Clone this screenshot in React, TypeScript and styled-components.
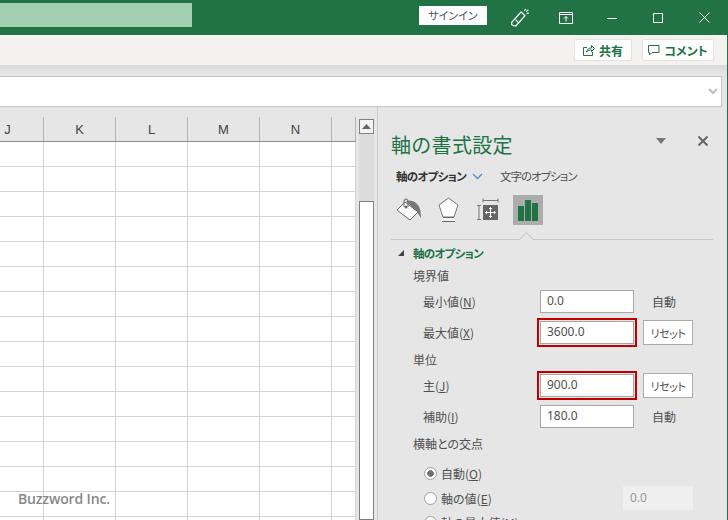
import styled, { createGlobalStyle } from "styled-components";

const GREEN = "#217346";
const CJK = `"Noto Sans CJK JP", "Noto Sans", sans-serif`;

const GlobalStyle = createGlobalStyle`
  html, body {
    margin: 0;
    padding: 0;
    background: #e6e6e6;
  }
  * {
    box-sizing: border-box;
  }
`;

const Page = styled.div`
  width: 728px;
  height: 520px;
  position: relative;
  overflow: hidden;
  display: flex;
  flex-direction: column;
  border-right: 1px solid ${GREEN};
  background: #e6e6e6;
  color: #505050;
  font-family: ${CJK};
  font-size: 12px;
  font-feature-settings: "palt";
`;

/* title bar */
const TitleBar = styled.header`
  height: 35px;
  flex: none;
  display: flex;
  align-items: center;
  background: ${GREEN};
`;

const SearchBox = styled.div`
  width: 192px;
  height: 24px;
  margin-top: -5px;
  margin-right: auto;
  background: #a3cfb3;
`;

const SignIn = styled.button`
  width: 68px;
  height: 19px;
  margin: -5px 10px 0 0;
  padding: 0;
  border: 0;
  background: #fff;
  color: #505050;
  font: 11px ${CJK};
  font-feature-settings: "palt";
`;

const WindowButton = styled.div`
  width: 46px;
  height: 35px;
  display: flex;
  align-items: center;
  justify-content: center;
`;

/* ribbon stub */
const Ribbon = styled.div`
  height: 30px;
  flex: none;
  display: flex;
  justify-content: flex-end;
  gap: 10px;
  padding: 4px 13px 0 0;
  background: #f3f2f1;
`;

const RibbonButton = styled.button<{ $w: number }>`
  width: ${(p) => p.$w}px;
  height: 22px;
  padding: 0;
  display: flex;
  align-items: center;
  justify-content: center;
  gap: 4px;
  border: 1px solid #e4e2e0;
  border-radius: 2px;
  background: #fff;
  color: ${GREEN};
  font: 700 12px ${CJK};
  font-feature-settings: "palt";
`;

const RibbonShadow = styled.div`
  height: 11px;
  flex: none;
  background: linear-gradient(#d9d9d9, #e6e6e6 80%);
`;

const FormulaBar = styled.div`
  height: 31px;
  flex: none;
  margin-right: 5px;
  display: flex;
  align-items: center;
  justify-content: flex-end;
  padding-right: 3px;
  background: #fff;
  border: 1px solid #c6c6c6;
  border-left: 0;
`;

/* sheet */
const Main = styled.main`
  flex: 1;
  min-height: 0;
  display: flex;
`;

const Sheet = styled.section`
  width: 377px;
  flex: none;
  display: flex;
  padding-top: 10px;
`;

const GridArea = styled.div`
  width: 356px;
  flex: none;
  overflow: hidden;
`;

/* column J runs off the left edge of the window */
const ColumnHeaders = styled.div`
  height: 25px;
  margin-left: -28px;
  display: grid;
  grid-template-columns: repeat(5, 72px) 24px;
  border-bottom: 1px solid #8c8c8c;
`;

const ColumnHeader = styled.div`
  display: flex;
  align-items: center;
  justify-content: center;
  border-right: 1px solid #b4b4b4;
  color: #444;
  font: 13px "Liberation Sans", sans-serif;
`;

const Cells = styled.div`
  margin-left: -28px;
  display: grid;
  grid-template-columns: repeat(5, 72px) 24px;
  grid-auto-rows: 25px;
  background: #fff;
  border-right: 1px solid #8c8c8c;
`;

const Cell = styled.div`
  border-right: 1px solid #d4d4d4;
  border-bottom: 1px solid #d4d4d4;
`;

const Scrollbar = styled.div`
  width: 15px;
  flex: none;
  margin: 2px 0 0 3px;
  display: flex;
  flex-direction: column;
`;

const ScrollUp = styled.div`
  height: 15px;
  flex: none;
  display: flex;
  align-items: center;
  justify-content: center;
  border: 1px solid #808080;
  background: #f2f2f2;
`;

const ScrollTrack = styled.div`
  height: 67px;
  flex: none;
  background: #dcdcdc;
`;

const ScrollThumb = styled.div`
  flex: 1;
  background: #fff;
  border: 1px solid #808080;
`;

/* format pane */
const Pane = styled.aside`
  flex: 1;
  min-width: 0;
  padding: 25px 14px 0 13px;
  border-left: 1px solid #cfcfcf;
  overflow: hidden;
`;

const PaneHeader = styled.div`
  height: 26px;
  margin-right: 4px;
  display: flex;
  align-items: flex-start;
`;

const PaneTitle = styled.h2`
  margin: 0 auto 0 0;
  color: ${GREEN};
  font: 400 20px/26px ${CJK};
  font-feature-settings: normal;
  letter-spacing: 0.3px;
`;

const PaneControl = styled.div<{ $gap?: number }>`
  width: 12px;
  height: 18px;
  margin-left: ${(p) => p.$gap ?? 0}px;
  display: flex;
  align-items: center;
  justify-content: center;
`;

const Tabs = styled.div`
  height: 20px;
  margin-top: 8px;
  padding-left: 5px;
  display: flex;
  align-items: center;
`;

const Tab = styled.span<{ $active?: boolean }>`
  font-size: 11.5px;
  font-weight: ${(p) => (p.$active ? 700 : 400)};
  letter-spacing: ${(p) => (p.$active ? "-0.7px" : "-1px")};
  color: ${(p) => (p.$active ? "#333" : "#505050")};
`;

const TabChevron = styled.span`
  display: flex;
  margin: 0 17px 0 6px;
`;

const IconRow = styled.div`
  margin-top: 9px;
  padding-left: 3px;
  display: flex;
  gap: 9px;
`;

const IconTab = styled.div<{ $active?: boolean }>`
  width: 30px;
  height: 30px;
  margin-left: ${(p) => (p.$active ? "2px" : 0)};
  display: flex;
  align-items: center;
  justify-content: center;
  background: ${(p) => (p.$active ? "#acacac" : "transparent")};
`;

const Divider = styled.div`
  position: relative;
  height: 1px;
  margin-top: 14px;
  background: #c8c8c8;

  &::before {
    content: "";
    position: absolute;
    left: 130px;
    top: -5px;
    width: 10px;
    height: 10px;
    transform: rotate(45deg);
    background: #e6e6e6;
    border-left: 1px solid #c8c8c8;
    border-top: 1px solid #c8c8c8;
  }
`;

const SectionHeader = styled.h3`
  height: 18px;
  margin: 4px 0 0;
  padding-left: 7px;
  display: flex;
  align-items: center;
  gap: 9px;
  color: ${GREEN};
  font: 700 11.5px ${CJK};
  font-feature-settings: "palt";
  letter-spacing: -0.7px;
`;

const Caret = styled.span`
  width: 0;
  height: 0;
  border-left: 6px solid transparent;
  border-bottom: 6px solid #444;
`;

const GroupLabel = styled.div<{ $top: number }>`
  height: 18px;
  margin-top: ${(p) => p.$top}px;
  padding-left: 22px;
  line-height: 18px;
`;

const FieldRow = styled.div<{ $h: number; $top: number }>`
  height: ${(p) => p.$h}px;
  margin-top: ${(p) => p.$top}px;
  display: flex;
  align-items: center;
`;

const FieldLabel = styled.label`
  width: 149px;
  flex: none;
  padding-left: 32px;
`;

const ValueBox = styled.div<{ $marked?: boolean }>`
  width: 94px;
  height: 23px;
  flex: none;
  padding-left: 6px;
  background: #fff;
  border: 1px solid #a6a6a6;
  font: 12px/20px "Noto Sans", sans-serif;
  outline: ${(p) => (p.$marked ? "2px solid #c00000" : "none")};
  outline-offset: 1px;
`;

const AutoNote = styled.span`
  margin-left: 18px;
`;

const ResetButton = styled.button`
  width: 50px;
  height: 25px;
  margin-left: 9px;
  padding: 0;
  background: #fff;
  border: 1px solid #ababab;
  color: #505050;
  font: 11px ${CJK};
  font-feature-settings: "palt";
  letter-spacing: -0.4px;
`;

const RadioRow = styled.label<{ $h: number; $top: number }>`
  height: ${(p) => p.$h}px;
  margin-top: ${(p) => p.$top}px;
  padding-left: 33px;
  display: flex;
  align-items: center;
`;

const RadioDot = styled.span<{ $checked?: boolean }>`
  width: 13px;
  height: 13px;
  flex: none;
  margin-right: 4px;
  border: 1px solid #a0a0a0;
  border-radius: 50%;
  background: radial-gradient(
    circle,
    ${(p) => (p.$checked ? "#707070 0 3px" : "#fff 0 3px")},
    #fff 3.5px
  );
`;

const DisabledBox = styled.div`
  width: 70px;
  height: 24px;
  margin: 0 20px 0 auto;
  padding-left: 7px;
  background: #efefef;
  color: #999;
  font: 12px/24px "Noto Sans", sans-serif;
`;

const Watermark = styled.div`
  position: absolute;
  left: 18px;
  top: 489px;
  color: #888;
  font: 600 14px "Open Sans", sans-serif;
  letter-spacing: -0.15px;
`;

const columns = ["J", "K", "L", "M", "N", ""];

function App() {
  return (
    <Page>
      <GlobalStyle />
      <TitleBar>
        <SearchBox />
        <SignIn>サインイン</SignIn>
        <WindowButton>
          <svg width="20" height="20" viewBox="0 0 18 18" fill="none" stroke="#fff" strokeWidth="1.1">
            <path d="M1.500 13 L10 3.500 L13.500 7 L5.500 16 Q3 16.500 1.500 15 Z" />
            <path d="M5 10.500 L8 13.500 M13 2.500 L14 1 M15 5 L17 4.500 M14.500 3.500 L16.500 1.500" />
          </svg>
        </WindowButton>
        <WindowButton>
          <svg width="14" height="12" viewBox="0 0 14 12" fill="none" stroke="#fff">
            <path d="M.5.5h13v11H.5z M.5 2.500h13 M7 9.500V4.500 M5 6.500l2-2 2 2" />
          </svg>
        </WindowButton>
        <WindowButton>
          <svg width="10" height="10" viewBox="0 0 10 10" stroke="#fff">
            <path d="M0 5.500h10" />
          </svg>
        </WindowButton>
        <WindowButton>
          <svg width="10" height="10" viewBox="0 0 10 10" fill="none" stroke="#fff">
            <path d="M.5.5h9v9h-9z" />
          </svg>
        </WindowButton>
        <WindowButton>
          <svg width="11" height="11" viewBox="0 0 11 11" stroke="#fff">
            <path d="M.5.5l10 10M10.500.5l-10 10" />
          </svg>
        </WindowButton>
      </TitleBar>

      <Ribbon>
        <RibbonButton $w={58}>
          <svg width="12" height="12" viewBox="0 0 12 12" fill="none" stroke={GREEN}>
            <path d="M4 3.500H.5v8h9V8 M3.500 8C4 5 6 4 8.500 4V1.500L11.500 4.500 8.500 7.500V6C6.500 6 5 6.500 3.500 8Z" />
          </svg>
          共有
        </RibbonButton>
        <RibbonButton $w={72}>
          <svg width="12" height="12" viewBox="0 0 12 12" fill="none" stroke={GREEN}>
            <path d="M.5 1.500h10.500v7H4L1.500 11V8.500H.5z" />
          </svg>
          コメント
        </RibbonButton>
      </Ribbon>
      <RibbonShadow />

      <FormulaBar>
        <svg width="10" height="7" viewBox="0 0 10 7" fill="none" stroke="#bdbdbd" strokeWidth="2">
          <path d="M1 1l4 4 4-4" />
        </svg>
      </FormulaBar>

      <Main>
        <Sheet>
          <GridArea>
            <ColumnHeaders>
              {columns.map((name, i) => (
                <ColumnHeader key={i}>{name}</ColumnHeader>
              ))}
            </ColumnHeaders>
            <Cells>
              {Array.from({ length: 96 }, (_, i) => (
                <Cell key={i} />
              ))}
            </Cells>
          </GridArea>
          <Scrollbar>
            <ScrollUp>
              <svg width="9" height="5" viewBox="0 0 9 5" fill="#666">
                <path d="M4.500 0L9 5H0z" />
              </svg>
            </ScrollUp>
            <ScrollTrack />
            <ScrollThumb />
          </Scrollbar>
        </Sheet>

        <Pane>
          <PaneHeader>
            <PaneTitle>軸の書式設定</PaneTitle>
            <PaneControl>
              <svg width="10" height="6" viewBox="0 0 10 6" fill="#777">
                <path d="M0 0h10L5 6z" />
              </svg>
            </PaneControl>
            <PaneControl $gap={30}>
              <svg width="10" height="10" viewBox="0 0 10 10" stroke="#666" strokeWidth="2">
                <path d="M.5.5l9 9M9.500.5l-9 9" />
              </svg>
            </PaneControl>
          </PaneHeader>

          <Tabs>
            <Tab $active>軸のオプション</Tab>
            <TabChevron>
              <svg width="11" height="7" viewBox="0 0 11 7" fill="none" stroke="#4a90c8" strokeWidth="1.3">
                <path d="M1 1l4.500 4.500L10 1" />
              </svg>
            </TabChevron>
            <Tab>文字のオプション</Tab>
          </Tabs>

          <IconRow>
            <IconTab>
              <svg width="26" height="24" viewBox="0 0 26 24">
                <path d="M10 3C16 1 23 5 24.500 13 L25 20 L21 14 Z" fill="#777" />
                <path d="M1 12 L9 4 L22 14 L14 22 Z" fill="#fff" stroke="#666" />
                <path d="M8 9V3a2 2 0 0 1 4 0v6" stroke="#666" fill="none" />
                <circle cx="10" cy="9" r="1.500" fill="#666" />
              </svg>
            </IconTab>
            <IconTab>
              <svg width="24" height="26" viewBox="0 0 24 26">
                <path d="M12.500 1 L22 8 L18 20 H7 L3 8 Z" fill="#fff" stroke="#777" />
                <path d="M7 20 L6 24 H19 L18 20 Z" fill="#f4f4f4" />
                <path d="M7 20.500h11 M6 24.500h13" stroke="#666" fill="none" />
              </svg>
            </IconTab>
            <IconTab>
              <svg width="24" height="24" viewBox="0 0 24 24">
                <path d="M8 2.500h15 M8 .5v4 M23 .5v4 M2 7.500h4 M2 21.500h4 M4 7.500v14" stroke="#777" fill="none" />
                <rect x="8" y="7" width="15" height="15" fill="#666" />
                <path d="M15.500 9.500v10 M10.500 14.500h10 M14 11l1.500-1.500L17 11 M14 18l1.500 1.500L17 18 M12 13l-1.500 1.500L12 16 M19 13l1.500 1.500L19 16" stroke="#fff" fill="none" />
              </svg>
            </IconTab>
            <IconTab $active>
              <svg width="20" height="21" viewBox="0 0 20 21" fill={GREEN}>
                <rect x="0" y="6" width="6" height="15" />
                <rect x="7" y="0" width="6" height="21" />
                <rect x="14" y="3" width="6" height="18" />
              </svg>
            </IconTab>
          </IconRow>

          <Divider />

          <SectionHeader>
            <Caret />
            軸のオプション
          </SectionHeader>

          <GroupLabel $top={5}>境界値</GroupLabel>
          <FieldRow $h={23} $top={5}>
            <FieldLabel>
              最小値(<u>N</u>)
            </FieldLabel>
            <ValueBox>0.0</ValueBox>
            <AutoNote>自動</AutoNote>
          </FieldRow>
          <FieldRow $h={29} $top={5}>
            <FieldLabel>
              最大値(<u>X</u>)
            </FieldLabel>
            <ValueBox $marked>3600.0</ValueBox>
            <ResetButton>リセット</ResetButton>
          </FieldRow>

          <GroupLabel $top={4}>単位</GroupLabel>
          <FieldRow $h={29} $top={2}>
            <FieldLabel>
              主(<u>J</u>)
            </FieldLabel>
            <ValueBox $marked>900.0</ValueBox>
            <ResetButton>リセット</ResetButton>
          </FieldRow>
          <FieldRow $h={23} $top={5}>
            <FieldLabel>
              補助(<u>I</u>)
            </FieldLabel>
            <ValueBox>180.0</ValueBox>
            <AutoNote>自動</AutoNote>
          </FieldRow>

          <GroupLabel $top={7}>横軸との交点</GroupLabel>
          <RadioRow $h={20} $top={10}>
            <RadioDot $checked />
            <span>
              自動(<u>O</u>)
            </span>
          </RadioRow>
          <RadioRow $h={24} $top={3}>
            <RadioDot />
            <span>
              軸の値(<u>E</u>)
            </span>
            <DisabledBox>0.0</DisabledBox>
          </RadioRow>
          <RadioRow $h={20} $top={2}>
            <RadioDot />
            <span>
              軸の最大値(<u>M</u>)
            </span>
          </RadioRow>
        </Pane>
      </Main>

      <Watermark>Buzzword Inc.</Watermark>
    </Page>
  );
}

export default App;
